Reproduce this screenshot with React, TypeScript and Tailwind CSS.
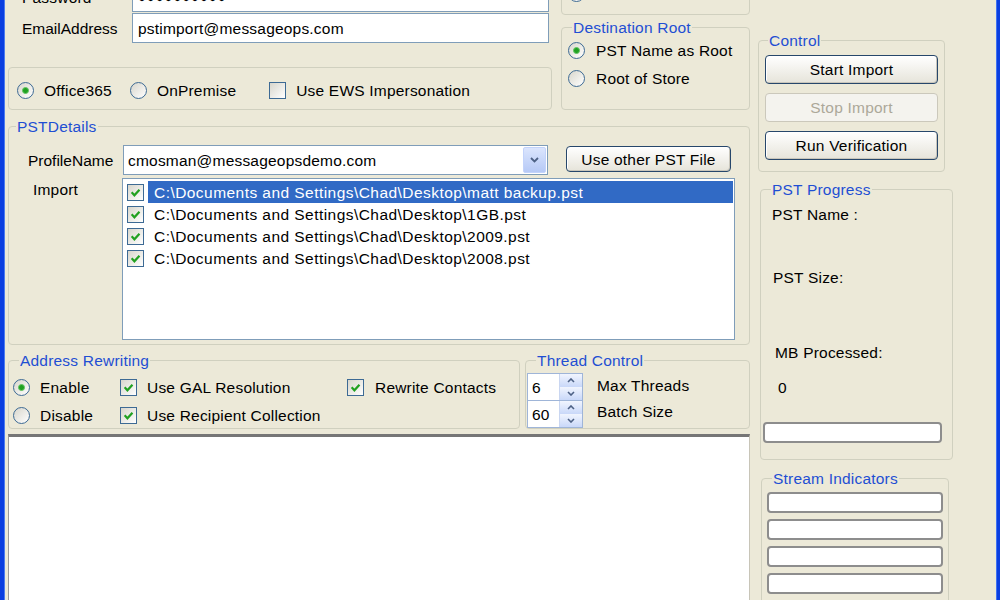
import React from 'react';

type Kids = { children?: React.ReactNode; className?: string };

// XP style group box: a fieldset whose legend cuts the rounded frame
function Group({ title, legendClass = 'ml-[10px]', className = '', children }: Kids & { title?: string; legendClass?: string }) {
  return (
    <fieldset className={`border border-[#d0d0bf] rounded-[4px] shrink-0 ${className}`}>
      {title && <legend className={`px-[1px] leading-[17px] text-[#1f4fd3] ${legendClass}`}>{title}</legend>}
      {children}
    </fieldset>
  );
}

function Radio({ checked = false }: { checked?: boolean }) {
  return (
    <span className="w-[17px] h-[17px] rounded-full border border-[#3d6a94] bg-linear-to-br from-[#d8d6cc] to-white flex items-center justify-center shrink-0">
      {checked && <span className="w-[7px] h-[7px] rounded-full bg-[#21a121] border border-[#63c463]" />}
    </span>
  );
}

function Check({ checked = false }: { checked?: boolean }) {
  return (
    <span className="w-[17px] h-[17px] border border-[#3d6a94] bg-linear-to-br from-[#d8d6cc] to-white flex items-center justify-center shrink-0">
      {checked && (
        <svg viewBox="0 0 10 10" className="w-[11px] h-[11px]">
          <path d="M1.5 4.8 L4 7.5 L8.6 2.4" stroke="#21a121" strokeWidth="2" fill="none" />
        </svg>
      )}
    </span>
  );
}

function Button({ children, disabled = false, className = '' }: Kids & { disabled?: boolean }) {
  const look = disabled
    ? 'border-[#cbc8bb] text-[#aca899] bg-[#f4f3ee]'
    : 'border-[#27476b] bg-linear-to-b from-white to-[#e6e4da] shadow-[inset_-1px_-1px_0_#c9c6bb,inset_1px_1px_0_#ffffff]';
  return <div className={`flex items-center justify-center rounded-[4px] border shrink-0 ${look} ${className}`}>{children}</div>;
}

function Chevron({ up = false }: { up?: boolean }) {
  return (
    <svg viewBox="0 0 8 5" className="w-[8px] h-[5px]">
      <path d={up ? 'M1 4 L4 1 L7 4' : 'M1 1 L4 4 L7 1'} stroke="#4d6185" strokeWidth="1.6" fill="none" />
    </svg>
  );
}

function Spinner({ value, className = '' }: { value: string; className?: string }) {
  return (
    <div className={`flex w-[56px] h-[28px] border border-[#9fb5d8] bg-white ${className}`}>
      <span className="flex-1 pl-[4px] flex items-center">{value}</span>
      <div className="w-[23px] flex flex-col border-l border-[#c9d6f1]">
        <div className="flex-1 bg-linear-to-b from-[#f1f5fe] to-[#c9d8f9] flex items-center justify-center">
          <Chevron up />
        </div>
        <div className="flex-1 bg-linear-to-b from-[#f1f5fe] to-[#c9d8f9] flex items-center justify-center">
          <Chevron />
        </div>
      </div>
    </div>
  );
}

function Bar({ className = '' }: { className?: string }) {
  return <div className={`h-[21px] w-[176px] rounded-[4px] border-2 border-[#8d8d8d] bg-white shrink-0 ${className}`} />;
}

const files = [
  'C:\\Documents and Settings\\Chad\\Desktop\\matt backup.pst',
  'C:\\Documents and Settings\\Chad\\Desktop\\1GB.pst',
  'C:\\Documents and Settings\\Chad\\Desktop\\2009.pst',
  'C:\\Documents and Settings\\Chad\\Desktop\\2008.pst',
];

export default function App() {
  return (
    <div className="w-[1000px] h-[600px] overflow-hidden flex bg-[#ece9d8] text-black text-[15.5px] tracking-[0.2px] leading-[17px] font-['Liberation_Sans',Arial,sans-serif]">
      {/* window frame, left */}
      <div className="w-[5px] shrink-0 bg-[#0a3ee0] border-r border-[#4c7cf0]" />

      <div className="flex-1 flex items-start">
        {/* main column */}
        <div className="w-[745px] ml-[3px] -mt-[20px] flex flex-col shrink-0">
          <div className="flex items-start">
            <div className="w-[544px] flex flex-col shrink-0">
              <div className="flex items-center h-[30px] mt-[2px]">
                <span className="w-[124px] pl-[14px] shrink-0">Password</span>
                <div className="w-[417px] h-[30px] border border-[#7f9db9] bg-white flex items-center pl-[5px] text-[13px] tracking-[1px]">
                  ●●●●●●●●●●
                </div>
              </div>
              <div className="flex items-center h-[30px] mt-[1px]">
                <span className="w-[124px] pl-[14px] shrink-0 tracking-normal">EmailAddress</span>
                <div className="w-[417px] h-[30px] border border-[#7f9db9] bg-white flex items-center pl-[5px]">
                  pstimport@messageops.com
                </div>
              </div>
              <div className="mt-[24px] h-[43px] w-[544px] border border-[#d0d0bf] rounded-[4px] flex items-center pl-[8px] pt-[4px]">
                <Radio checked />
                <span className="ml-[10px]">Office365</span>
                <span className="ml-[18px]"><Radio /></span>
                <span className="ml-[10px]">OnPremise</span>
                <span className="ml-[33px]"><Check /></span>
                <span className="ml-[10px]">Use EWS Impersonation</span>
              </div>
            </div>

            <div className="ml-[9px] w-[189px] flex flex-col shrink-0">
              <div className="h-[35px] w-[189px] border border-[#d0d0bf] rounded-[4px] flex items-end pb-[12px] pl-[6px]">
                <Radio />
              </div>
              <Group title="Destination Root" className="mt-[4px] h-[91px] w-[189px]">
                <div className="flex items-center h-[28px] pl-[6px]">
                  <Radio checked />
                  <span className="ml-[11px]">PST Name as Root</span>
                </div>
                <div className="flex items-center h-[28px] pl-[6px]">
                  <Radio />
                  <span className="ml-[11px]">Root of Store</span>
                </div>
              </Group>
            </div>
          </div>

          <Group title="PSTDetails" legendClass="ml-[7px]" className="mt-[8px] h-[227px] w-[742px]">
            <div className="flex items-start mt-[10px]">
              <span className="w-[114px] pl-[19px] h-[30px] flex items-center shrink-0 tracking-normal">ProfileName</span>
              <div className="w-[425px] h-[30px] border border-[#7f9db9] bg-white flex items-center shrink-0">
                <span className="flex-1 pl-[4px]">cmosman@messageopsdemo.com</span>
                <div className="w-[23px] h-[26px] mr-[1px] rounded-[2px] bg-linear-to-b from-[#dbe5fd] to-[#b6c9f6] border border-[#c3d3fb] flex items-center justify-center">
                  <svg viewBox="0 0 9 6" className="w-[9px] h-[6px]">
                    <path d="M1 1 L4.5 4.5 L8 1" stroke="#4d6185" strokeWidth="1.8" fill="none" />
                  </svg>
                </div>
              </div>
              <Button className="ml-[18px] mt-[1px] w-[165px] h-[26px]">Use other PST File</Button>
            </div>
            <div className="flex items-start mt-[3px]">
              <span className="w-[113px] pl-[24px] pt-[3px] shrink-0">Import</span>
              <div className="w-[613px] h-[162px] border border-[#7f9db9] bg-white pt-[2px] shrink-0">
                {files.map((f, i) => (
                  <div key={f} className="flex items-center h-[22px] pl-[4px]">
                    <Check checked />
                    <span className={`ml-[4px] w-[585px] h-[22px] flex items-center pl-[6px] tracking-[0.45px] ${i === 0 ? 'bg-[#316ac5] text-white' : ''}`}>{f}</span>
                  </div>
                ))}
              </div>
            </div>
          </Group>

          <div className="flex items-start mt-[7px]">
            <Group title="Address Rewriting" className="h-[77px] w-[512px]">
              <div className="grid grid-cols-[107px_227px_1fr] grid-rows-[28px_28px] items-center pl-[4px] pt-[4px]">
                <div className="flex items-center"><Radio checked /><span className="ml-[10px]">Enable</span></div>
                <div className="flex items-center"><Check checked /><span className="ml-[10px]">Use GAL Resolution</span></div>
                <div className="flex items-center"><Check checked /><span className="ml-[11px]">Rewrite Contacts</span></div>
                <div className="flex items-center"><Radio /><span className="ml-[10px]">Disable</span></div>
                <div className="flex items-center"><Check checked /><span className="ml-[10px]">Use Recipient Collection</span></div>
              </div>
            </Group>
            <Group title="Thread Control" className="ml-[5px] h-[77px] w-[225px]">
              <div className="flex items-start pl-[1px] pt-[4px]">
                <div className="flex flex-col">
                  <Spinner value="6" />
                  <Spinner value="60" className="-mt-[1px]" />
                </div>
                <div className="flex flex-col ml-[14px] pt-[4px]">
                  <span>Max Threads</span>
                  <span className="mt-[9px]">Batch Size</span>
                </div>
              </div>
            </Group>
          </div>

          {/* log output */}
          <div className="mt-[5px] w-[742px] h-[200px] bg-white border-t-[3px] border-t-[#767676] border-l border-l-[#9a9a9a] border-r border-r-[#c8c5b8]" />
        </div>

        {/* side column */}
        <div className="flex flex-col items-start">
          <Group title="Control" legendClass="ml-[9px]" className="ml-[5px] mt-[32px] h-[140px] w-[187px]">
            <div className="flex flex-col gap-[9px] pl-[6px] pt-[6px]">
              <Button className="w-[173px] h-[29px]">Start Import</Button>
              <Button disabled className="w-[173px] h-[29px]">Stop Import</Button>
              <Button className="w-[173px] h-[29px]">Run Verification</Button>
            </div>
          </Group>

          <Group title="PST Progress" className="ml-[7px] mt-[9px] h-[279px] w-[193px]">
            <div className="flex flex-col">
              <span className="pl-[11px] mt-[8px]">PST Name :</span>
              <span className="pl-[12px] mt-[46px]">PST Size:</span>
              <span className="pl-[14px] mt-[58px]">MB Processed:</span>
              <span className="pl-[17px] mt-[18px]">0</span>
              <Bar className="ml-[2px] mt-[26px] w-[179px]" />
            </div>
          </Group>

          <Group title="Stream Indicators" className="ml-[8px] mt-[10px] h-[180px] w-[188px]">
            <div className="flex flex-col gap-[6px] pl-[5px] pt-[5px]">
              <Bar className="w-[175px]" />
              <Bar className="w-[175px]" />
              <Bar className="w-[175px]" />
              <Bar className="w-[175px]" />
              <Bar className="w-[175px]" />
            </div>
          </Group>
        </div>
      </div>

      {/* window frame, right */}
      <div className="w-[4px] shrink-0 bg-[#0a3ee0] border-l border-[#3f72f2]" />
    </div>
  );
}
